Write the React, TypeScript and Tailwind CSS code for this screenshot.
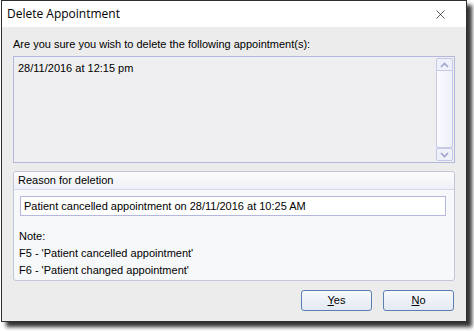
import { X } from "lucide-react";

const body = { fontFamily: '"Liberation Sans", Arial, sans-serif' };

const Chevron = ({ up }: { up?: boolean }) => (
  <svg width="9" height="6" viewBox="0 0 9 6" className="block">
    <path
      d={up ? "M1 5 L4.5 1.5 L8 5" : "M1 1 L4.5 4.5 L8 1"}
      fill="none"
      stroke="#9fa4cc"
      strokeWidth="1.6"
    />
  </svg>
);

const DialogButton = ({ label, rest }: { label: string; rest: string }) => (
  <button className="w-[71px] h-[21px] rounded-[3px] border border-[#5a7fb3] bg-gradient-to-b from-[#f7f9fc] to-[#e3e9f3] text-[11px] text-black flex items-center justify-center">
    <span>
      <span className="underline">{label}</span>
      {rest}
    </span>
  </button>
);

export default function App() {
  return (
    <div className="w-[474px] h-[331px] bg-white overflow-hidden" style={body}>
      <div className="ml-[1px] w-[466px] h-[322px] border border-[#2f2f2f] bg-[#ececec] flex flex-col shadow-[5px_5px_4px_rgba(0,0,0,0.8)]">
        {/* Title bar */}
        <div className="h-[26px] bg-white flex items-center justify-between pl-[5px] pr-[18px] shrink-0">
          <span className="text-[12px] text-black" style={{ fontFamily: '"Open Sans", "Noto Sans", sans-serif' }}>
            Delete Appointment
          </span>
          <X className="w-[15px] h-[15px] text-black" strokeWidth={1} />
        </div>

        <div className="pl-[11px] flex flex-col">
          <div className="h-[29px] flex items-center pt-[6px] text-[11px] text-black">
            Are you sure you wish to delete the following appointment(s):
          </div>

          {/* Appointment list */}
          <div className="w-[442px] h-[107px] border border-[#b4b8dc] bg-[#efeff1] flex">
            <div className="flex-1 pl-[4px] pt-[3px] text-[11px] text-black">28/11/2016 at 12:15 pm</div>
            <div className="w-[17px] my-[1px] mr-[1px] flex flex-col">
              <div className="h-[13px] rounded-t-[2px] border border-[#c5c9e4] bg-[#eef0fa] flex items-center justify-center">
                <Chevron up />
              </div>
              <div className="flex-1 border-x border-b border-[#c5c9e4] rounded-b-[3px] bg-gradient-to-r from-[#fbfbff] to-[#eef0fa]" />
              <div className="h-[13px] rounded-b-[2px] border border-[#c5c9e4] bg-[#eef0fa] flex items-center justify-center">
                <Chevron />
              </div>
            </div>
          </div>

          {/* Reason group */}
          <div className="mt-[8px] w-[442px] h-[110px] rounded-[3px] border border-[#c3c6da] bg-[#f7f8fa] flex flex-col">
            <div className="h-[18px] border-b border-[#d4d7ea] bg-gradient-to-b from-[#fcfcfd] to-[#eff0f6] rounded-t-[3px] pl-[4px] flex items-center text-[11px] text-black">
              Reason for deletion
            </div>
            <div className="px-[6px] pt-[6px]">
              <div className="w-[426px] h-[20px] border border-[#b4b8dc] bg-white pl-[3px] flex items-center text-[11px] text-black">
                Patient cancelled appointment on 28/11/2016 at 10:25 AM
              </div>
            </div>
            <div className="pl-[5px] pt-[14px] flex flex-col gap-[4px] text-[11px] text-black leading-[13px]">
              <div>Note:</div>
              <div>F5 - 'Patient cancelled appointment'</div>
              <div>F6 - 'Patient changed appointment'</div>
            </div>
          </div>

          {/* Buttons */}
          <div className="w-[441px] mt-[9px] flex justify-end gap-[11px]">
            <DialogButton label="Y" rest="es" />
            <DialogButton label="N" rest="o" />
          </div>
        </div>
      </div>
    </div>
  );
}
